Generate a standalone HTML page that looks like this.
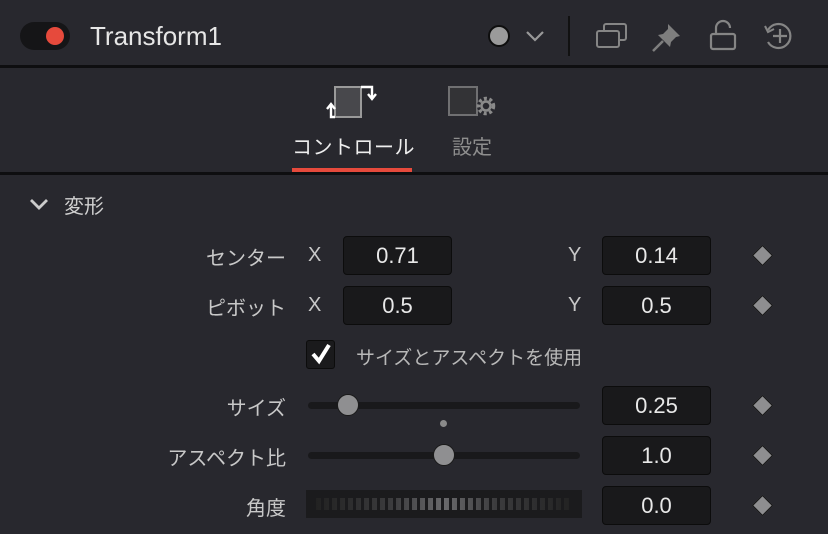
<!DOCTYPE html>
<html><head><meta charset="utf-8"><style>
*{margin:0;padding:0;box-sizing:border-box}
body{width:828px;height:534px;background:#28282e;font-family:"Liberation Sans","Noto Sans CJK JP",sans-serif;color:#d0d0d0;position:relative;overflow:hidden}
.a{position:absolute}
.lbl{position:absolute;font-size:20px;color:#c8c8c8;text-align:right;width:200px}
.box{position:absolute;width:109px;height:39px;background:#19191b;border:1.5px solid #0c0c0c;border-radius:4px;color:#e8e8e8;font-size:22px;text-align:center;line-height:37px}
.xy{position:absolute;font-size:20px;color:#c8c8c8}
.dia{position:absolute;width:15px;height:15px;background:#8e8e90;border:1px solid #111;transform:rotate(45deg)}
.track{position:absolute;left:308px;width:272px;height:7px;background:#19191b;border-radius:4px}
.knob{position:absolute;width:22px;height:22px;border-radius:50%;background:#8f8f91;border:1.5px solid #1a1a1a}
</style></head><body>
<div class="a" style="left:20px;top:22px;width:50px;height:28px;border-radius:14px;background:#151517"></div>
<div class="a" style="left:46px;top:27px;width:18px;height:18px;border-radius:50%;background:#e64a3c"></div>
<div class="a" style="left:90px;top:21px;font-size:26px;color:#e6e6e6">Transform1</div>
<div class="a" style="left:488px;top:25px;width:22px;height:22px;border-radius:50%;background:#9a9a9a;border:2px solid #0e0e0e"></div>
<svg class="a" style="left:524px;top:28px" width="22" height="16"><path d="M3 4 L11 12 L19 4" stroke="#999" stroke-width="2.2" fill="none"/></svg>
<div class="a" style="left:568px;top:16px;width:2px;height:40px;background:#111"></div>
<svg class="a" style="left:594px;top:22px" width="34" height="28"><rect x="10" y="2" width="22" height="16" rx="2" fill="none" stroke="#858585" stroke-width="2"/><rect x="3" y="9" width="22" height="16" rx="2" fill="#28282e" stroke="#858585" stroke-width="2"/></svg>
<svg class="a" style="left:650px;top:22px" width="34" height="30"><path d="M18 2 L30 14 L26 15 L21 20 L20 25 L8 13 L13 12 L18 7 Z" fill="#7e7e7e"/><path d="M13 19 L3 29" stroke="#7e7e7e" stroke-width="2.5"/></svg>
<svg class="a" style="left:708px;top:18px" width="32" height="34"><path d="M8 16 V10 a7 7 0 0 1 14 0" fill="none" stroke="#858585" stroke-width="2.2"/><rect x="3" y="16" width="24" height="15" rx="2" fill="none" stroke="#858585" stroke-width="2.2"/></svg>
<svg class="a" style="left:762px;top:20px" width="34" height="32"><path d="M6 10 A12 12 0 1 1 6 22" fill="none" stroke="#858585" stroke-width="2.2"/><path d="M3 6 L6 12 L12 9" fill="none" stroke="#858585" stroke-width="2"/><path d="M18 9 V23 M11 16 H25" stroke="#858585" stroke-width="2.2"/></svg>
<div class="a" style="left:0;top:65px;width:828px;height:3px;background:#0e0e10"></div>
<!-- tabs -->
<svg class="a" style="left:324px;top:84px" width="60" height="38"><rect x="11" y="3" width="26" height="30" fill="#48484c" stroke="#9a9a9a" stroke-width="2"/><path d="M37 3 H48 V14 M44 10 L48 15 L52 10" fill="none" stroke="#fff" stroke-width="2.4"/><path d="M11 33 H7 V22 M3 25 L7 20 L11 25" fill="none" stroke="#fff" stroke-width="2.4"/></svg>
<svg class="a" style="left:446px;top:84px" width="56" height="36"><rect x="3" y="3" width="28" height="28" fill="#333336" stroke="#707072" stroke-width="2"/><circle cx="40" cy="22" r="9" fill="#28282e"/><circle cx="40" cy="22" r="7.5" fill="none" stroke="#8a8a8a" stroke-width="3.5" stroke-dasharray="3 2.5"/><circle cx="40" cy="22" r="4.5" fill="none" stroke="#8a8a8a" stroke-width="2.5"/></svg>
<div class="a" style="left:292px;top:131px;font-size:20px;color:#eee;letter-spacing:0.5px">コントロール</div>
<div class="a" style="left:452px;top:131px;font-size:20px;color:#8e8e8e">設定</div>
<div class="a" style="left:292px;top:168px;width:120px;height:4px;background:#e64a3c"></div>
<div class="a" style="left:0;top:172px;width:828px;height:3px;background:#0e0e10"></div>
<!-- section -->
<svg class="a" style="left:28px;top:195px" width="22" height="18"><path d="M3 5 L11 13 L19 5" stroke="#ccc" stroke-width="2.8" fill="none"/></svg>
<div class="a" style="left:64px;top:190px;font-size:20px;color:#d0d0d0">変形</div>
<div class="lbl" style="left:86px;top:242px">センター</div>
<div class="lbl" style="left:86px;top:292px">ピボット</div>
<div class="xy" style="left:308px;top:244px">X</div><div class="box" style="left:343px;top:236px">0.71</div>
<div class="xy" style="left:568px;top:244px">Y</div><div class="box" style="left:602px;top:236px">0.14</div>
<div class="dia" style="left:755px;top:248px"></div>
<div class="xy" style="left:308px;top:294px">X</div><div class="box" style="left:343px;top:286px">0.5</div>
<div class="xy" style="left:568px;top:294px">Y</div><div class="box" style="left:602px;top:286px">0.5</div>
<div class="dia" style="left:755px;top:298px"></div>
<div class="a" style="left:306px;top:340px;width:29px;height:29px;background:#1a1a1c;border:1.5px solid #0c0c0c;border-radius:3px"></div>
<svg class="a" style="left:308px;top:341px" width="26" height="26"><path d="M5 13 L11 20 L21 4" stroke="#fff" stroke-width="4" fill="none"/></svg>
<div class="a" style="left:356px;top:343px;font-size:19px;color:#b8b8b8">サイズとアスペクトを使用</div>
<div class="lbl" style="left:86px;top:392px">サイズ</div>
<div class="track" style="top:402px"></div>
<div class="knob" style="left:337px;top:394px"></div>
<div class="a" style="left:440px;top:420px;width:7px;height:7px;border-radius:50%;background:#8a8a8a"></div>
<div class="box" style="left:602px;top:386px">0.25</div>
<div class="dia" style="left:755px;top:398px"></div>
<div class="lbl" style="left:86px;top:442px">アスペクト比</div>
<div class="track" style="top:452px"></div>
<div class="knob" style="left:433px;top:444px"></div>
<div class="box" style="left:602px;top:436px">1.0</div>
<div class="dia" style="left:755px;top:448px"></div>
<div class="lbl" style="left:86px;top:492px">角度</div>
<div class="a" style="left:306px;top:490px;width:276px;height:28px;background:#1b1b1d;display:flex;padding:8px 10px;justify-content:center">
<div style="flex:1;background:linear-gradient(90deg,#222 0%,#3c3c3e 30%,#6a6a6c 50%,#3c3c3e 70%,#222 100%);-webkit-mask:repeating-linear-gradient(90deg,#000 0 5px,transparent 5px 8px);mask:repeating-linear-gradient(90deg,#000 0 5px,transparent 5px 8px)"></div></div>
<div class="box" style="left:602px;top:486px">0.0</div>
<div class="dia" style="left:755px;top:498px"></div>
</body></html>
